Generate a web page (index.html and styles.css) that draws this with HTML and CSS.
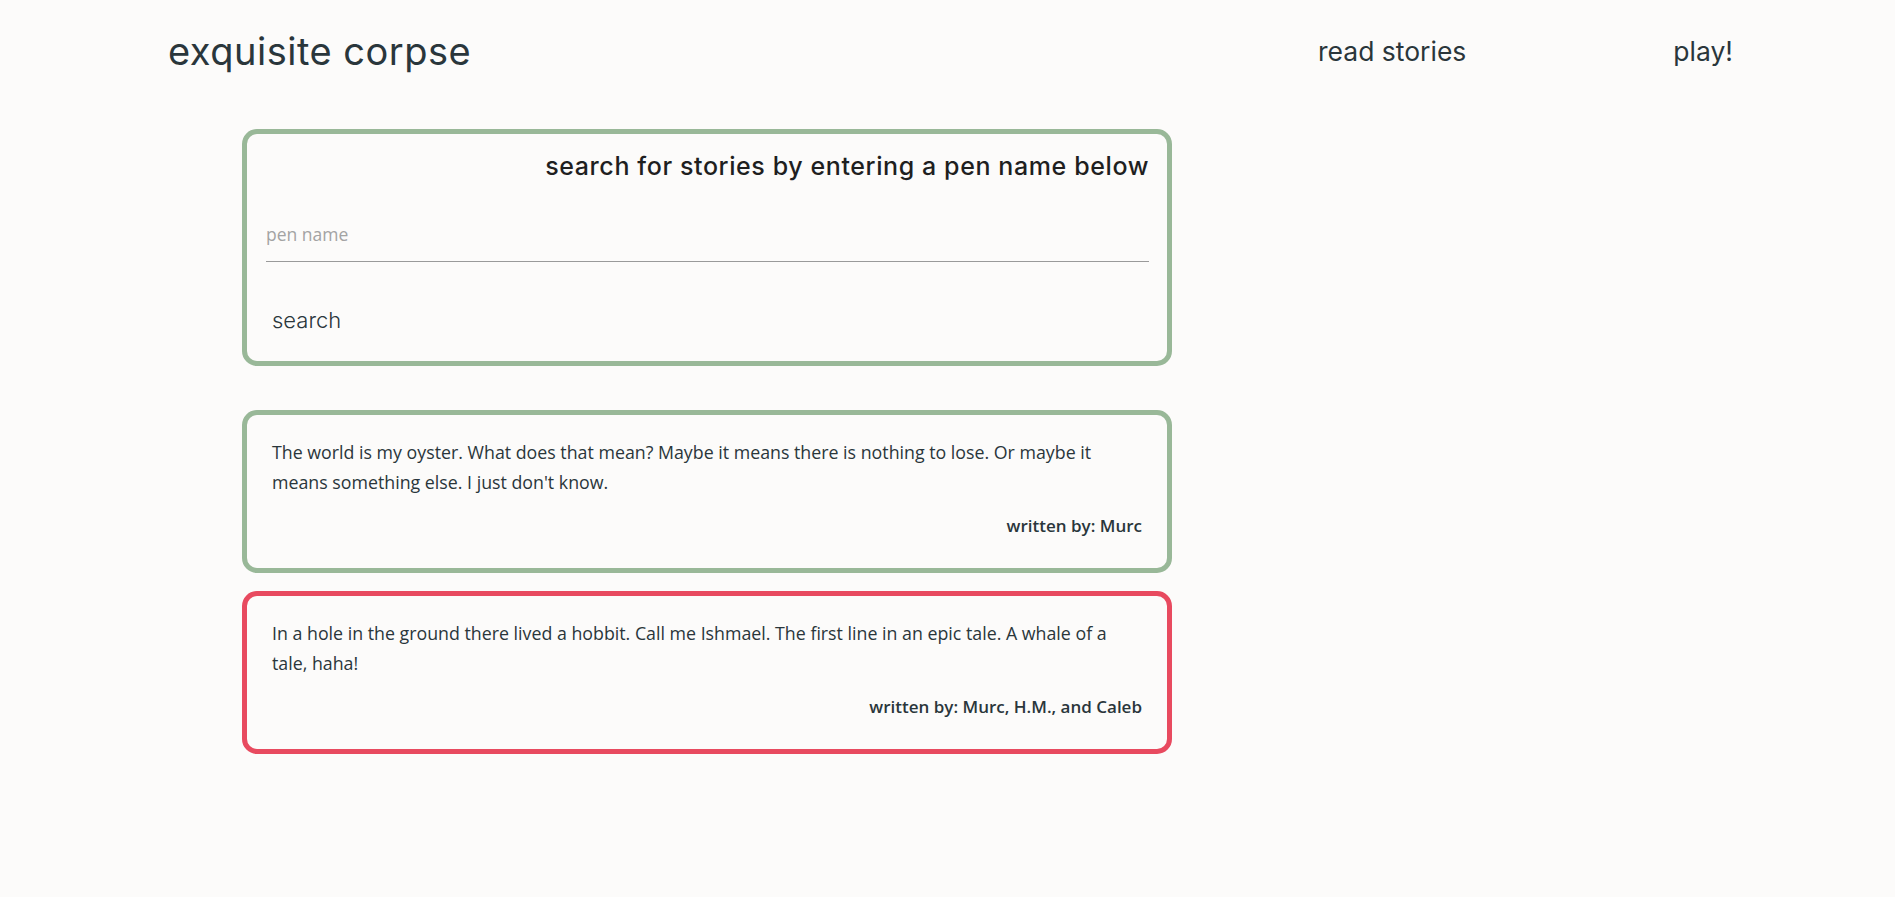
FILE: index.html
```html
<!DOCTYPE html>
<html lang="en">
<head>
<meta charset="utf-8">
<title>exquisite corpse</title>
<link rel="stylesheet" href="styles.css">
</head>
<body>
<header class="site-header">
  <a class="brand" href="#">exquisite corpse</a>
  <nav class="nav">
    <a class="nav-link" href="#">read stories</a>
    <a class="nav-link nav-play" href="#">play!</a>
  </nav>
</header>
<main class="main">
  <section class="card search-card">
    <h2 class="search-title">search for stories by entering a pen name below</h2>
    <input class="pen-input" type="text" placeholder="pen name">
    <button class="search-btn" type="button">search</button>
  </section>
  <div class="stories">
    <article class="card story story-green">
      <p class="story-text">The world is my oyster. What does that mean? Maybe it means there is nothing to lose. Or maybe it means something else. I just don't know.</p>
      <p class="story-author">written by: Murc</p>
    </article>
    <article class="card story story-red">
      <p class="story-text">In a hole in the ground there lived a hobbit. Call me Ishmael. The first line in an epic tale. A whale of a tale, haha!</p>
      <p class="story-author">written by: Murc, H.M., and Caleb</p>
    </article>
  </div>
</main>
</body>
</html>
```
FILE: styles.css
```css
* { box-sizing: border-box; }
html, body { margin: 0; padding: 0; }
body {
  background: #fcfbfa;
  color: #2a363b;
  font-family: "Inter", "Open Sans", sans-serif;
}
a { color: inherit; text-decoration: none; }

.site-header {
  height: 102px;
  display: flex;
  align-items: center;
  justify-content: space-between;
  padding: 0 162px 0 168px;
}
.brand {
  font-size: 38px;
  font-weight: 400;
  letter-spacing: 0.5px;
  line-height: 46px;
}
.nav {
  display: flex;
  align-items: center;
  gap: 207px;
}
.nav-link {
  font-size: 26.5px;
  line-height: 32px;
}

.main {
  width: 930px;
  margin: 27px 0 0 242px;
}
.card {
  border: 5px solid #99b898;
  border-radius: 15px;
}
.search-card {
  padding: 16px 18px 18px 19px;
  display: flex;
  flex-direction: column;
}
.search-title {
  margin: 0;
  text-align: right;
  font-size: 25px;
  font-weight: 500;
  letter-spacing: 0.6px;
  line-height: 32px;
  color: #1f1f1f;
}
.pen-input {
  margin-top: 28px;
  height: 52px;
  border: none;
  border-bottom: 1px solid #9a9a9a;
  background: transparent;
  padding: 0 0 4px;
  font-family: "Open Sans", sans-serif;
  font-size: 17.5px;
  color: #2a363b;
  outline: none;
}
.pen-input::placeholder { color: #a3a3a3; }
.search-btn {
  align-self: flex-start;
  margin-top: 35px;
  border: none;
  background: transparent;
  padding: 10px 6px;
  font-family: "Inter", sans-serif;
  font-size: 22px;
  font-weight: 300;
  line-height: 26px;
  color: #2a363b;
  cursor: pointer;
}

.stories {
  margin-top: 44px;
  display: flex;
  flex-direction: column;
  gap: 18px;
}
.story {
  padding: 22px 25px 30px;
}
.story-red { border-color: #e84a5f; }
.story-text {
  margin: 0;
  font-family: "Open Sans", sans-serif;
  font-size: 17.8px;
  line-height: 30px;
  color: #2a363b;
}
.story-author {
  margin: 17px 0 0;
  text-align: right;
  font-family: "Open Sans", sans-serif;
  font-size: 17px;
  font-weight: 600;
  line-height: 24px;
  color: #2a363b;
}
```
